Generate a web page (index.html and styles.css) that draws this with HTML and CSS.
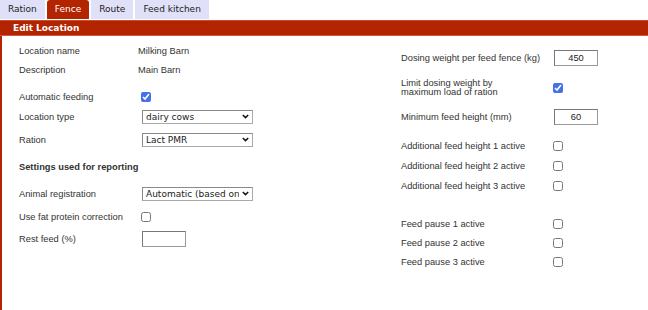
FILE: index.html
```html
<!doctype html>
<html>

<head>
    <meta charset="utf-8">
    <title>Edit Location</title>
    <link rel="stylesheet" href="styles.css">
</head>

<body>
    <ul class="tabs">
        <li>Ration</li>
        <li class="active">Fence</li>
        <li>Route</li>
        <li>Feed kitchen</li>
    </ul>

    <div class="panel">
        <div class="panel-title">Edit Location</div>

        <div class="panel-body">
            <!-- left column -->
            <div class="col left">
                <div class="row sm">
                    <span class="label">Location name</span>
                    <span class="value">Milking Barn</span>
                </div>
                <div class="row sm">
                    <span class="label">Description</span>
                    <span class="value">Main Barn</span>
                </div>
                <div class="row mt8">
                    <span class="label">Automatic feeding</span>
                    <input type="checkbox" checked>
                </div>
                <div class="row">
                    <span class="label">Location type</span>
                    <span class="select">
                        <select>
                            <option>dairy cows</option>
                        </select>
                        <svg class="chev" width="7" height="5" viewBox="0 0 7 5"><path d="M0.8 1 L3.5 3.6 L6.2 1" fill="none" stroke="#111" stroke-width="1.5"/></svg>
                    </span>
                </div>
                <div class="row mt3">
                    <span class="label">Ration</span>
                    <span class="select">
                        <select>
                            <option>Lact PMR</option>
                        </select>
                        <svg class="chev" width="7" height="5" viewBox="0 0 7 5"><path d="M0.8 1 L3.5 3.6 L6.2 1" fill="none" stroke="#111" stroke-width="1.5"/></svg>
                    </span>
                </div>
                <div class="row mt7">
                    <span class="heading">Settings used for reporting</span>
                </div>
                <div class="row mt7">
                    <span class="label">Animal registration</span>
                    <span class="select">
                        <select>
                            <option>Automatic (based on location)</option>
                        </select>
                        <svg class="chev" width="7" height="5" viewBox="0 0 7 5"><path d="M0.8 1 L3.5 3.6 L6.2 1" fill="none" stroke="#111" stroke-width="1.5"/></svg>
                    </span>
                </div>
                <div class="row mt3">
                    <span class="label">Use fat protein correction</span>
                    <input type="checkbox">
                </div>
                <div class="row mt2">
                    <span class="label">Rest feed (%)</span>
                    <input type="text" class="num" value="">
                </div>
            </div>

            <!-- right column -->
            <div class="col right">
                <div class="row mt7">
                    <span class="label">Dosing weight per feed fence (kg)</span>
                    <input type="text" class="num" value="450">
                </div>
                <div class="row tall mt9">
                    <span class="label two">Limit dosing weight by<br>maximum load of ration</span>
                    <input type="checkbox" checked>
                </div>
                <div class="row mt9">
                    <span class="label">Minimum feed height (mm)</span>
                    <input type="text" class="num" value="60">
                </div>
                <div class="row mt9">
                    <span class="label">Additional feed height 1 active</span>
                    <input type="checkbox">
                </div>
                <div class="row">
                    <span class="label">Additional feed height 2 active</span>
                    <input type="checkbox">
                </div>
                <div class="row">
                    <span class="label">Additional feed height 3 active</span>
                    <input type="checkbox">
                </div>
                <div class="row sm mt18">
                    <span class="label">Feed pause 1 active</span>
                    <input type="checkbox">
                </div>
                <div class="row sm">
                    <span class="label">Feed pause 2 active</span>
                    <input type="checkbox">
                </div>
                <div class="row sm">
                    <span class="label">Feed pause 3 active</span>
                    <input type="checkbox">
                </div>
            </div>
        </div>
    </div>
</body>

</html>
```

FILE: styles.css
```css
* {
    margin: 0;
    padding: 0;
    box-sizing: border-box;
}

ol,
ul,
li {
    list-style: none;
}

body {
    background: #fff;
    font-family: "Liberation Sans", Arial, sans-serif;
    font-size: 9.3px;
    color: #333;
}

/* tabs */
.tabs {
    display: flex;
    gap: 2px;
    height: 19px;
    margin-bottom: 1px;
}

.tabs li {
    padding: 0 8px;
    line-height: 19px;
    background: #e0e0f8;
    font-family: "DejaVu Sans", Tahoma, sans-serif;
    font-size: 9px;
    color: #222;
}

.tabs li.active {
    background: #b32400;
    color: #fff;
    border-radius: 3px 3px 0 0;
}

/* panel */
.panel {
    min-height: 290px;
}

.panel-title {
    height: 16px;
    padding-left: 13px;
    background: #b32400;
    border-top: 1px solid #c94a33;
    border-bottom: 1px solid #cc5a45;
    font-family: "DejaVu Sans", Tahoma, sans-serif;
    font-size: 9px;
    font-weight: bold;
    line-height: 14px;
    color: #fff;
}

.panel-body {
    display: flex;
    min-height: 274px;
    padding: 5px 0 0 17px;
    border-left: 2px solid #b32400;
}

.col.left {
    width: 382px;
}

.col.left .label {
    width: 119px;
}

.col.right .label {
    width: 151px;
}

.row {
    display: flex;
    align-items: center;
    height: 20px;
}

.row.sm {
    height: 19px;
}

.row.tall {
    height: 21px;
}

.mt2 { margin-top: 2px; }
.mt3 { margin-top: 3px; }
.mt7 { margin-top: 7px; }
.mt8 { margin-top: 8px; }
.mt9 { margin-top: 9px; }
.mt18 { margin-top: 18px; }

.label {
    flex: none;
    white-space: nowrap;
}

.label.two {
    line-height: 9px;
}

.heading {
    font-weight: bold;
}

/* controls */
input[type="checkbox"] {
    width: 10px;
    height: 10px;
    margin: 0 0 0 3px;
    accent-color: #4470ea;
}

.col.right input[type="checkbox"] {
    margin-left: 1px;
}

.select {
    position: relative;
    display: flex;
    margin-left: 4px;
}

select {
    appearance: none;
    width: 111px;
    height: 14px;
    padding: 0 13px 0 3px;
    border: 1px solid #8a8a8a;
    border-right-color: #aaa;
    border-bottom-color: #aaa;
    border-radius: 0;
    background: #fff;
    font-family: "DejaVu Sans", Tahoma, sans-serif;
    font-size: 9px;
    line-height: 12px;
    color: #222;
}

.chev {
    position: absolute;
    right: 4px;
    top: 4px;
    pointer-events: none;
}

.num {
    width: 44px;
    height: 16px;
    margin-left: 4px;
    border: 1px solid #999;
    border-top-color: #777;
    border-left-color: #777;
    font-family: "Liberation Sans", Arial, sans-serif;
    font-size: 9.3px;
    text-align: center;
    color: #222;
}

.col.right .num {
    margin-left: 2px;
}
```
